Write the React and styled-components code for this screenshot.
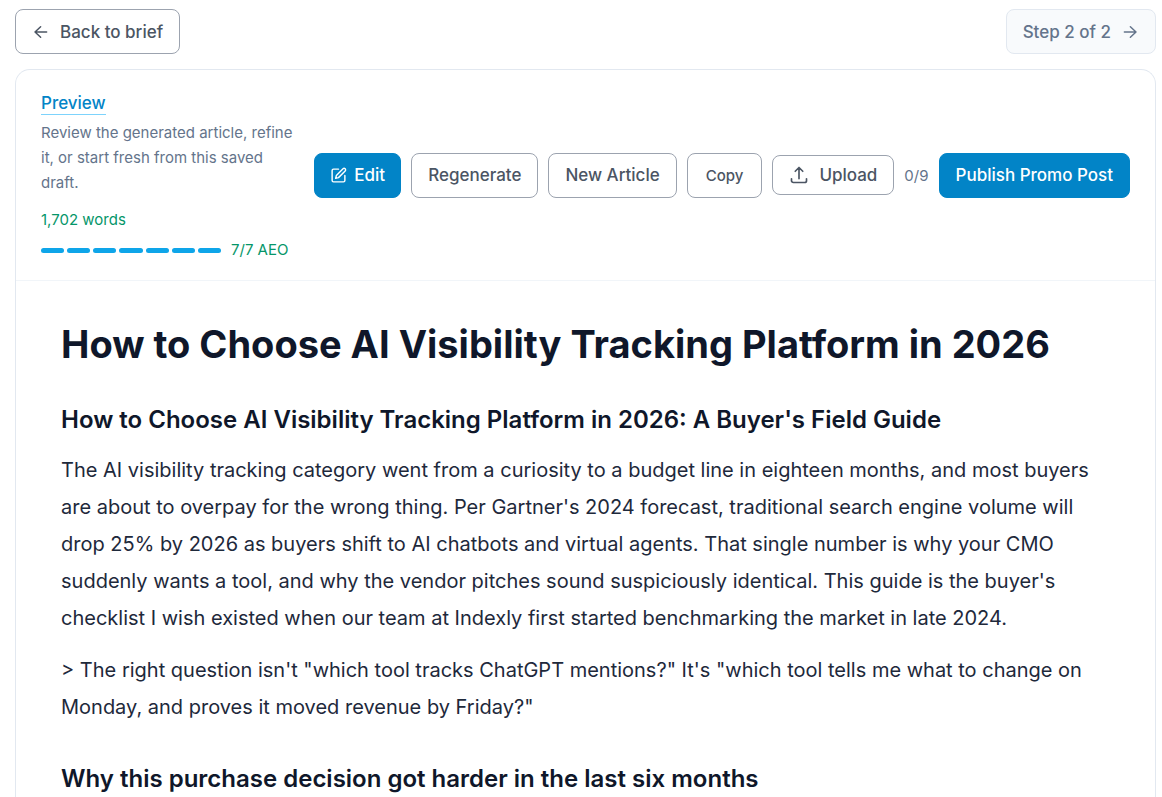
import React from "react";
import styled, { createGlobalStyle } from "styled-components";

const GlobalStyle = createGlobalStyle`
  *, *::before, *::after { box-sizing: border-box; }
  body {
    margin: 0;
    background: #ffffff;
    color: #1e293b;
    font-family: Inter, "Liberation Sans", sans-serif;
  }
  h1, h2, p { margin: 0; }
`;

const Page = styled.main`
  padding: 9px 6px 0 15px;
`;

const StepBar = styled.nav`
  display: flex;
  justify-content: space-between;
  margin-bottom: 15px;
`;

const variants = {
  outline: "background: #ffffff; border-color: #9ca3af; color: #4b5563;",
  primary: "background: #0284c7; border-color: #0284c7; color: #ffffff;",
  muted: "background: #f8fafc; border-color: #e2e8f0; color: #64748b;",
};

const Button = styled.button`
  display: inline-flex;
  align-items: center;
  justify-content: center;
  gap: ${(p) => p.$gap || 10}px;
  height: ${(p) => (p.$short ? 40 : 45)}px;
  padding: 0 ${(p) => p.$pad || 16}px;
  border: 1px solid;
  border-radius: 8px;
  font-family: inherit;
  font-size: ${(p) => (p.$small ? 15 : 17)}px;
  font-weight: 500;
  line-height: ${(p) => (p.$small ? 25 : 26)}px;
  white-space: nowrap;
  ${(p) => variants[p.$variant || "outline"]}
`;

const Card = styled.section`
  border: 1px solid #e2e8f0;
  border-bottom: 0;
  border-radius: 15px 15px 0 0;
`;

const CardHeader = styled.header`
  display: flex;
  align-items: center;
  gap: 15px;
  padding: 20px 25px;
  border-bottom: 1px solid #f1f5f9;
`;

const Summary = styled.div`
  flex: 1;
  min-width: 0;
  font-size: 15px;
  line-height: 20px;
`;

const PreviewLink = styled.a`
  display: block;
  width: fit-content;
  margin-bottom: 5px;
  padding-top: 2px;
  border-bottom: 1px solid #7dd3fc;
  color: #0284c7;
  font-size: 17px;
  font-weight: 500;
  line-height: 22px;
  text-decoration: none;
`;

const Description = styled.p`
  margin-bottom: 15px;
  color: #64748b;
  line-height: 25px;
`;

const WordCount = styled.p`
  margin-bottom: 10px;
  color: #059669;
`;

const Score = styled.div`
  display: flex;
  align-items: center;
  gap: 10px;
  color: #059669;
  white-space: nowrap;
`;

const Segments = styled.div`
  display: flex;
  flex: none;
  gap: 3px;
  width: 180px;
`;

const Segment = styled.span`
  flex: 1;
  height: 5px;
  border-radius: 3px;
  background: #0ea5e9;
`;

const Actions = styled.div`
  display: flex;
  flex: none;
  align-items: center;
  gap: 10px;
`;

const Counter = styled.span`
  color: #64748b;
  font-size: 15px;
`;

const Article = styled.article`
  padding: 38px 45px 20px;
  font-size: 20px;
  line-height: 37px;
`;

const Title = styled.h1`
  margin-bottom: 33px;
  color: #0f172a;
  font-size: 38px;
  font-weight: 700;
  line-height: 50px;
`;

const Heading = styled.h2`
  margin-bottom: 15px;
  color: #0f172a;
  font-size: 24px;
  font-weight: 600;
  line-height: 35px;

  p + & { margin-top: 35px; }
`;

const Paragraph = styled.p`
  & + & { margin-top: 15px; }
`;

const Icon = ({ size, children, stroke = 2 }) => (
  <svg
    width={size}
    height={size}
    viewBox="0 0 24 24"
    fill="none"
    stroke="currentColor"
    strokeWidth={stroke}
    strokeLinecap="round"
    strokeLinejoin="round"
    aria-hidden="true"
  >
    {children}
  </svg>
);

const TOTAL_CHECKS = 7;

const PULL_QUOTE =
  '> The right question isn\'t "which tool tracks ChatGPT mentions?" It\'s "which tool tells me what to change on Monday, and proves it moved revenue by Friday?"';

export default function App() {
  return (
    <>
      <GlobalStyle />
      <Page>
        <StepBar>
          <Button type="button">
            <Icon size={18}><path d="M19.500 12H4M11.500 19l-7.500-7 7.500-7" /></Icon>
            Back to brief
          </Button>
          <Button type="button" $variant="muted" disabled>
            Step 2 of 2
            <Icon size={18}><path d="M4.500 12H20M12.500 5l7.500 7-7.500 7" /></Icon>
          </Button>
        </StepBar>
        <Card>
          <CardHeader>
            <Summary>
              <PreviewLink href="#article">Preview</PreviewLink>
              <Description>
                Review the generated article, refine it, or start fresh from this saved draft.
              </Description>
              <WordCount>1,702 words</WordCount>
              <Score>
                <Segments>
                  {Array.from({ length: TOTAL_CHECKS }, (_, i) => <Segment key={i} />)}
                </Segments>
                7/7 AEO
              </Score>
            </Summary>
            <Actions>
              <Button type="button" $variant="primary" $gap={7} $pad={15}>
                <Icon size={17}>
                  <path d="M12 3H5a2 2 0 0 0-2 2v14a2 2 0 0 0 2 2h14a2 2 0 0 0 2-2v-7" />
                  <path d="M18.4 2.6a2.1 2.1 0 0 1 3 3L12 15l-4 1 1-4Z" />
                </Icon>
                Edit
              </Button>
              <Button type="button">Regenerate</Button>
              <Button type="button">New Article</Button>
              <Button type="button" $small $pad={18}>Copy</Button>
              <Button type="button" $short>
                <Icon size={20}>
                  <path d="M3 16.500v2.250A2.250 2.250 0 0 0 5.250 21h13.500A2.250 2.250 0 0 0 21 18.750V16.500M7.500 7.500L12 3l4.500 4.500M12 3v13.500" />
                </Icon>
                Upload
              </Button>
              <Counter>0/9</Counter>
              <Button type="button" $variant="primary">Publish Promo Post</Button>
            </Actions>
          </CardHeader>
          <Article id="article">
            <Title>How to Choose AI Visibility Tracking Platform in 2026</Title>
            <Heading>How to Choose AI Visibility Tracking Platform in 2026: A Buyer's Field Guide</Heading>
            <Paragraph>
              The AI visibility tracking category went from a curiosity to a budget line in eighteen
              months, and most buyers are about to overpay for the wrong thing. Per Gartner's 2024
              forecast, traditional search engine volume will drop 25% by 2026 as buyers shift to AI
              chatbots and virtual agents. That single number is why your CMO suddenly wants a tool,
              and why the vendor pitches sound suspiciously identical. This guide is the buyer's
              checklist I wish existed when our team at Indexly first started benchmarking the market
              in late 2024.
            </Paragraph>
            <Paragraph>{PULL_QUOTE}</Paragraph>
            <Heading>Why this purchase decision got harder in the last six months</Heading>
          </Article>
        </Card>
      </Page>
    </>
  );
}
